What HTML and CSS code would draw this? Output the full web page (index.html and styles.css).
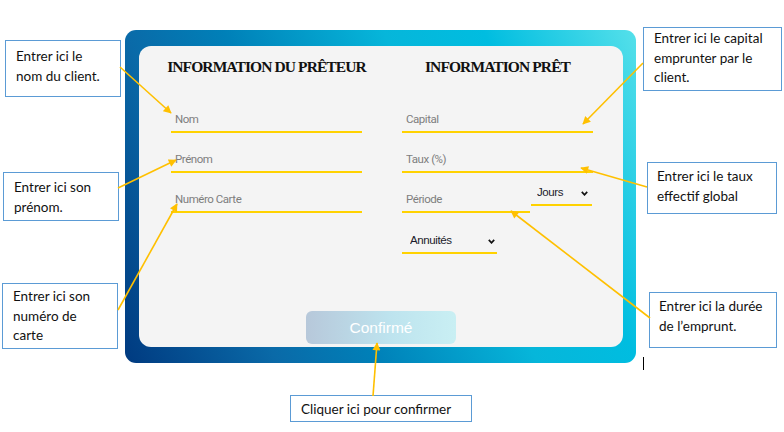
FILE: index.html
```html
<!DOCTYPE html>
<html lang="fr">
<head>
<meta charset="utf-8">
<title>Information prêt</title>
<link rel="stylesheet" href="styles.css">
</head>
<body>
<div class="page">
  <div class="stage">
    <div class="card">
      <div class="panel">
        <div class="columns">
          <section class="col">
            <h2>INFORMATION DU PRÊTEUR</h2>
            <div class="stack">
              <input class="field" placeholder="Nom">
              <input class="field" placeholder="Prénom">
              <input class="field" placeholder="Numéro Carte">
            </div>
          </section>
          <section class="col">
            <h2>INFORMATION PRÊT</h2>
            <div class="stack">
              <input class="field" placeholder="Capital">
              <input class="field" placeholder="Taux (%)">
              <div class="row">
                <input class="field short" placeholder="Période">
                <div class="sel sel-unit">
                  <select><option>Jours</option></select>
                  <svg class="chev" width="7" height="5" viewBox="0 0 7 5"><path d="M0.8 0.9 L3.5 3.8 L6.2 0.9" fill="none" stroke="#111" stroke-width="1.7"/></svg>
                </div>
              </div>
              <div class="sel sel-type">
                <select><option>Annuités</option></select>
                <svg class="chev" width="7" height="5" viewBox="0 0 7 5"><path d="M0.8 0.9 L3.5 3.8 L6.2 0.9" fill="none" stroke="#111" stroke-width="1.7"/></svg>
              </div>
            </div>
          </section>
        </div>
        <button class="confirm">Confirmé</button>
      </div>
    </div>
  </div>

  <div class="note n1">Entrer ici le<br>nom du client.</div>
  <div class="note n2">Entrer ici son<br>prénom.</div>
  <div class="note n3">Entrer ici son<br>numéro de<br>carte</div>
  <div class="note n4">Entrer ici le capital<br>emprunter par le<br>client.</div>
  <div class="note n5">Entrer ici le taux<br>effectif global</div>
  <div class="note n6">Entrer ici la durée<br>de l’emprunt.</div>
  <div class="note n7">Cliquer ici pour confirmer</div>
  <span class="caret"></span>

  <svg class="arrows" width="784" height="432" viewBox="0 0 784 432">
    <defs>
      <marker id="ah" viewBox="0 0 10 10" refX="9" refY="5" markerWidth="9" markerHeight="8" markerUnits="userSpaceOnUse" orient="auto">
        <path d="M0,0 L10,5 L0,10 z" fill="#ffc000"/>
      </marker>
    </defs>
    <g stroke="#ffc000" stroke-width="1.6" fill="none" marker-end="url(#ah)">
      <line x1="120" y1="67" x2="171" y2="113"/>
      <line x1="118" y1="188" x2="176" y2="160"/>
      <line x1="118" y1="310" x2="177" y2="204"/>
      <line x1="643" y1="63" x2="583" y2="124"/>
      <line x1="647" y1="187" x2="581" y2="168"/>
      <line x1="650" y1="318" x2="511" y2="211"/>
      <line x1="373" y1="396" x2="377" y2="343"/>
    </g>
  </svg>
</div>
</body>
</html>
```
FILE: styles.css
```css
html, body {
  margin: 0;
  padding: 0;
  background: #ffffff;
}

.page {
  position: relative;
  width: 784px;
  height: 432px;
  overflow: hidden;
  font-family: Roboto, "Liberation Sans", Arial, sans-serif;
}

.stage {
  padding: 30px 0 0 125px;
}

.card {
  width: 511px;
  height: 333px;
  box-sizing: border-box;
  padding: 16px 13px 16px 14px;
  border-radius: 11px;
  background: linear-gradient(65deg, #003a80 0%, #0a6aa8 23%, #0080b8 38%, #06b6da 62%, #00bde0 77%, #55e0ea 100%);
}

.panel {
  height: 100%;
  box-sizing: border-box;
  background: #f4f4f4;
  border-radius: 12px;
  padding: 11px 0 3px 0;
  display: flex;
  flex-direction: column;
}

.columns {
  display: grid;
  grid-template-columns: 191px 191px;
  column-gap: 40px;
  padding-left: 32px;
}

.col h2 {
  margin: 0 0 30px 0;
  display: flex;
  justify-content: center;
  white-space: nowrap;
  font-family: "Liberation Serif", "Times New Roman", serif;
  font-weight: 700;
  font-size: 15.5px;
  line-height: 20px;
  letter-spacing: -0.9px;
  color: #111111;
}

.stack {
  display: flex;
  flex-direction: column;
  gap: 14px;
}

.field {
  display: block;
  width: 191px;
  height: 26px;
  box-sizing: border-box;
  margin: 0;
  padding: 0 4px;
  border: 0;
  border-bottom: 2px solid #ffd200;
  background: transparent;
  outline: none;
  font-family: Roboto, "Liberation Sans", sans-serif;
  font-size: 11.5px;
  letter-spacing: -0.45px;
  color: #555;
}

.field::placeholder {
  color: #7e7e7e;
}

.row {
  display: flex;
  align-items: flex-start;
}

.field.short {
  width: 128px;
}

.sel {
  position: relative;
  height: 26px;
}

.sel select {
  appearance: none;
  -webkit-appearance: none;
  display: block;
  width: 100%;
  height: 26px;
  box-sizing: border-box;
  margin: 0;
  border: 0;
  border-bottom: 2px solid #ffd200;
  border-radius: 0;
  background: transparent;
  outline: none;
  font-family: "Liberation Sans", Arial, sans-serif;
  font-size: 11.5px;
  letter-spacing: -0.4px;
  color: #1a1a2a;
}

.sel-unit {
  width: 61px;
  margin: -7px 0 0 1px;
}

.sel-unit select {
  padding: 0 0 0 6px;
}

.sel-type {
  width: 95px;
  margin-top: 1px;
}

.sel-type select {
  padding: 0 0 0 8px;
}

.chev {
  position: absolute;
  top: 11px;
  right: 4px;
}

.sel-type .chev {
  right: 2px;
}

.confirm {
  margin-top: auto;
  align-self: center;
  width: 150px;
  height: 33px;
  border: 0;
  border-radius: 6px;
  background: linear-gradient(90deg, #b7c8da 0%, #bde3ee 55%, #c9eff3 100%);
  color: #ffffff;
  font-family: "Liberation Sans", Arial, sans-serif;
  font-size: 15.5px;
  padding: 0;
}

.note {
  position: absolute;
  box-sizing: border-box;
  border: 1px solid #5b9bd5;
  background: #ffffff;
  font-family: Lato, "Open Sans", sans-serif;
  font-size: 13.5px;
  line-height: 20px;
  color: #111111;
  white-space: nowrap;
}

.n1 { left: 5px; top: 40px; width: 116px; height: 57px; padding: 5px 0 0 10px; }
.n2 { left: 3px; top: 172px; width: 116px; height: 49px; padding: 4px 0 0 10px; }
.n3 { left: 2px; top: 283px; width: 116px; height: 66px; padding: 3px 0 0 10px; line-height: 19.5px; }
.n4 { left: 643px; top: 27px; width: 139px; height: 64px; padding: 1px 0 0 10px; line-height: 19.5px; }
.n5 { left: 647px; top: 162px; width: 130px; height: 52px; padding: 3px 0 0 9px; }
.n6 { left: 649px; top: 292px; width: 128px; height: 56px; padding: 3px 0 0 9px; }
.n7 { left: 290px; top: 395px; width: 182px; height: 27px; padding: 3px 0 0 10px; }

.caret {
  position: absolute;
  left: 643px;
  top: 357px;
  width: 1px;
  height: 13px;
  background: #000000;
}

.arrows {
  position: absolute;
  left: 0;
  top: 0;
  pointer-events: none;
}
```
